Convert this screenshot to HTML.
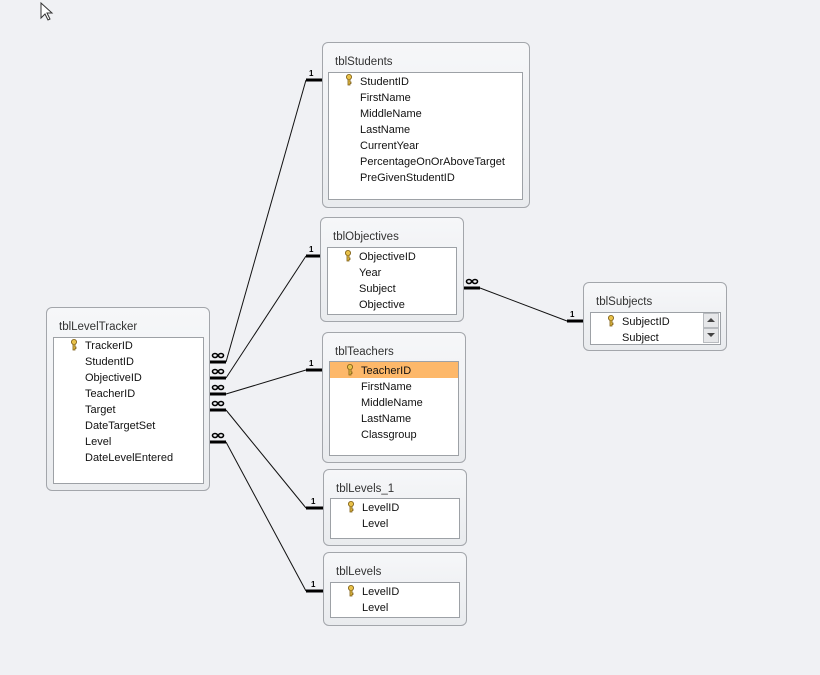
<!DOCTYPE html>
<html><head><style>
body{margin:0;width:820px;height:675px;background:#f0f1f4;position:relative;overflow:hidden;font-family:"Liberation Sans",sans-serif;}
.t{position:absolute;border:1px solid #a3a6ab;border-radius:6px;background:linear-gradient(#f6f7f9,#e9ebee);box-sizing:border-box;}
.tt{position:absolute;left:12px;top:13px;font-size:11.5px;color:#333;}
.l{position:absolute;background:#fff;border:1px solid #9da1a6;box-sizing:border-box;}
.r{position:absolute;font-size:11px;color:#111;white-space:nowrap;line-height:16px;}
svg.o{position:absolute;left:0;top:0;}
</style></head><body>
<svg class="o" width="820" height="675">
<g stroke="#111" stroke-width="1" fill="none">
<line x1="226" y1="362" x2="306" y2="80"/>
<line x1="226" y1="378" x2="306" y2="256"/>
<line x1="226" y1="394" x2="306" y2="370"/>
<line x1="226" y1="410" x2="306" y2="508"/>
<line x1="226" y1="442" x2="306" y2="591"/>
<line x1="480" y1="288" x2="567" y2="321"/>
</g>
<g stroke="#000" stroke-width="3">
<line x1="210" y1="362" x2="226" y2="362"/><line x1="210" y1="378" x2="226" y2="378"/>
<line x1="210" y1="394" x2="226" y2="394"/><line x1="210" y1="410" x2="226" y2="410"/>
<line x1="210" y1="442" x2="226" y2="442"/>
<line x1="306" y1="80" x2="322" y2="80"/><line x1="306" y1="256" x2="320" y2="256"/>
<line x1="306" y1="370" x2="322" y2="370"/><line x1="306" y1="508" x2="323" y2="508"/>
<line x1="306" y1="591" x2="323" y2="591"/>
<line x1="464" y1="288" x2="480" y2="288"/><line x1="567" y1="321" x2="583" y2="321"/>
</g>
<g fill="none" stroke="#000" stroke-width="1.6">
<g id="inf"><ellipse cx="215" cy="355.5" rx="2.5" ry="2"/><ellipse cx="221" cy="355.5" rx="2.5" ry="2"/></g>
<use href="#inf" y="16"/><use href="#inf" y="32"/><use href="#inf" y="48"/><use href="#inf" y="80"/><use href="#inf" x="254" y="-74"/>
</g>
<g font-family="Liberation Sans" font-size="8" font-weight="bold" fill="#000">
<text x="309" y="76">1</text><text x="309" y="252">1</text><text x="309" y="366">1</text><text x="311" y="504">1</text><text x="311" y="587">1</text><text x="570" y="317">1</text>
</g>
<path d="M41 3 L41 18 L45 14 L48 20 L50 19 L47 13 L52 13 Z" fill="#fff" stroke="#333" stroke-width="1"/>
</svg>

<div class="t" style="left:322px;top:42px;width:208px;height:166px"><div class="tt">tblStudents</div></div>
<div class="l" style="left:328px;top:72px;width:195px;height:128px"></div>
<div class="r" style="left:360px;top:74px">StudentID<br>FirstName<br>MiddleName<br>LastName<br>CurrentYear<br>PercentageOnOrAboveTarget<br>PreGivenStudentID</div>

<div class="t" style="left:320px;top:217px;width:144px;height:105px"><div class="tt">tblObjectives</div></div>
<div class="l" style="left:327px;top:247px;width:130px;height:68px"></div>
<div class="r" style="left:359px;top:249px">ObjectiveID<br>Year<br>Subject<br>Objective</div>

<div class="t" style="left:583px;top:282px;width:144px;height:69px"><div class="tt">tblSubjects</div></div>
<div class="l" style="left:590px;top:312px;width:131px;height:33px"></div>
<div class="r" style="left:622px;top:314px">SubjectID<br>Subject</div>
<div style="position:absolute;left:703px;top:313px;width:16px;height:15px;background:#e6e7e9;border:1px solid #b8bbbf;box-sizing:border-box"></div>
<div style="position:absolute;left:707px;top:318px;border-left:4px solid transparent;border-right:4px solid transparent;border-bottom:4px solid #444"></div>
<div style="position:absolute;left:703px;top:328px;width:16px;height:15px;background:#e6e7e9;border:1px solid #b8bbbf;box-sizing:border-box"></div>
<div style="position:absolute;left:707px;top:333px;border-left:4px solid transparent;border-right:4px solid transparent;border-top:4px solid #444"></div>

<div class="t" style="left:322px;top:332px;width:144px;height:131px"><div class="tt">tblTeachers</div></div>
<div class="l" style="left:329px;top:361px;width:130px;height:95px"></div>
<div style="position:absolute;left:330px;top:362px;width:128px;height:16px;background:#fdb86a"></div>
<div class="r" style="left:361px;top:363px">TeacherID<br>FirstName<br>MiddleName<br>LastName<br>Classgroup</div>

<div class="t" style="left:323px;top:469px;width:144px;height:77px"><div class="tt">tblLevels_1</div></div>
<div class="l" style="left:330px;top:498px;width:130px;height:41px"></div>
<div class="r" style="left:362px;top:500px">LevelID<br>Level</div>

<div class="t" style="left:323px;top:552px;width:144px;height:74px"><div class="tt">tblLevels</div></div>
<div class="l" style="left:330px;top:582px;width:130px;height:36px"></div>
<div class="r" style="left:362px;top:584px">LevelID<br>Level</div>

<div class="t" style="left:46px;top:307px;width:164px;height:184px"><div class="tt">tblLevelTracker</div></div>
<div class="l" style="left:53px;top:337px;width:151px;height:147px"></div>
<div class="r" style="left:85px;top:338px">TrackerID<br>StudentID<br>ObjectiveID<br>TeacherID<br>Target<br>DateTargetSet<br>Level<br>DateLevelEntered</div>

<svg class="o" width="820" height="675">
<g fill="#e8c14a" stroke="#7a5a10" stroke-width="0.8">
<g transform="translate(346,74)"><circle cx="3" cy="3" r="2.6"/><path d="M2 5.5 V11 H4 V9.5 H5 V8 H4 V5.5"/></g>
<g transform="translate(345,250)"><circle cx="3" cy="3" r="2.6"/><path d="M2 5.5 V11 H4 V9.5 H5 V8 H4 V5.5"/></g>
<g transform="translate(608,315)"><circle cx="3" cy="3" r="2.6"/><path d="M2 5.5 V11 H4 V9.5 H5 V8 H4 V5.5"/></g>
<g transform="translate(347,364)"><circle cx="3" cy="3" r="2.6"/><path d="M2 5.5 V11 H4 V9.5 H5 V8 H4 V5.5"/></g>
<g transform="translate(348,501)"><circle cx="3" cy="3" r="2.6"/><path d="M2 5.5 V11 H4 V9.5 H5 V8 H4 V5.5"/></g>
<g transform="translate(348,585)"><circle cx="3" cy="3" r="2.6"/><path d="M2 5.5 V11 H4 V9.5 H5 V8 H4 V5.5"/></g>
<g transform="translate(71,339)"><circle cx="3" cy="3" r="2.6"/><path d="M2 5.5 V11 H4 V9.5 H5 V8 H4 V5.5"/></g>
</g>
</svg>
</body></html>
